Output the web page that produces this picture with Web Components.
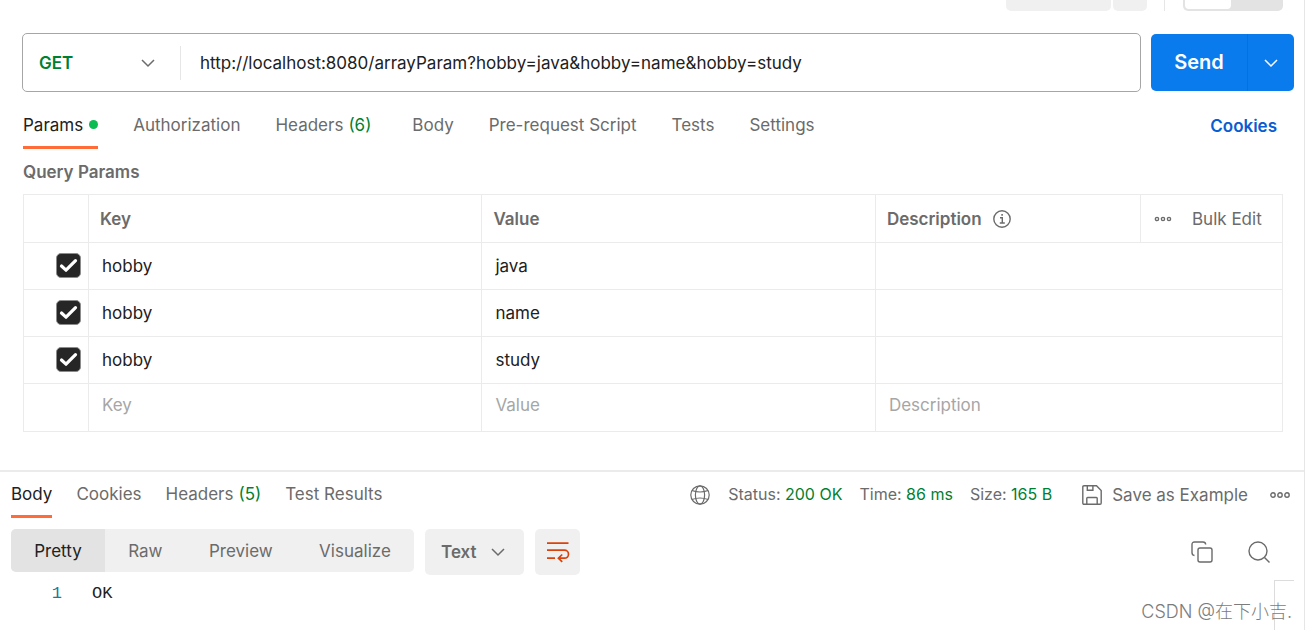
<!DOCTYPE html>
<html lang="en">
<head>
<meta charset="utf-8">
<title>API client</title>
<style>
html, body { margin: 0; }
body { background: #fff; color: #212121; font: 17px/24px Inter, "Noto Sans CJK SC", sans-serif; }
</style>
</head>
<body>
<api-client></api-client>
<script>
const define = (name, html, setup) => {
  const template = document.createElement('template');
  template.innerHTML = html;
  customElements.define(name, class extends HTMLElement {
    connectedCallback() {
      if (this.shadowRoot) return;
      this.attachShadow({ mode: 'open' }).append(template.content.cloneNode(true));
      if (setup) setup(this, this.shadowRoot);
    }
  });
};

const icons = {
  chevron: [14, 8, '<path d="M1 1l6 6 6-6" stroke-width="1.5"/>'],
  info: [18, 18, '<circle cx="9" cy="9" r="8.2"/><path d="M7 7.8h2.3V13M6.8 13h5" /><path d="M8.3 4.9h1.6" stroke-width="1.8"/>'],
  dots: [18, 6, '<circle cx="3" cy="3" r="1.6"/><circle cx="9" cy="3" r="1.6"/><circle cx="15" cy="3" r="1.6"/>'],
  more: [20, 6, '<circle cx="3" cy="3" r="2.2"/><circle cx="10" cy="3" r="2.2"/><circle cx="17" cy="3" r="2.2"/>'],
  globe: [20, 20, '<g stroke-width="1.2"><circle cx="10" cy="10" r="9.2"/><ellipse cx="10" cy="10" rx="4.600" ry="9.200"/><path d="M2 5.500Q10 8.500 18 5.500M2 14.500Q10 11.500 18 14.500"/></g>'],
  save: [20, 20, '<path d="M2 .8h12.500L19.200 5.500V18q0 1.200-1.200 1.200H2Q.8 19.200.8 18V2Q.8.8 2 .8z"/><path d="M5.300 1v4.200h5.600V1M4.800 19v-5.700q0-.8.8-.8h8.800q.8 0 .8.800V19"/>'],
  copy: [22, 22, '<path d="M3.500 14.500Q1 14.300 1 11.500V3.500Q1 1 3.500 1H12q2.500 0 2.700 2.500"/><rect x="7" y="7" width="14" height="14" rx="2"/>'],
  search: [22, 22, '<circle cx="10" cy="10" r="9"/><path d="M16.500 16.500L21.500 21.500"/>'],
  wrap: [22, 20, '<path d="M0 1.200h21.500M0 8.200H17.500a4 4 0 0 1 0 8H12M0 16.200h8M15.200 12.500l-3.800 3.700 3.800 3.700" stroke-width="1.700"/>'],
  check: [25, 25, '<path d="M5.500 13l4.500 4.200 9.500-9.500" stroke-width="3.200" stroke-linecap="round" stroke-linejoin="round"/>']
};
define('ui-icon', `<style>
  :host { display: inline-flex; flex: none; pointer-events: none; }
  svg { display: block; overflow: visible; fill: none; stroke: currentColor; stroke-width: 1.4; }
</style>`, (el, root) => {
  const [w, h, body] = icons[el.getAttribute('name')];
  root.innerHTML += `<svg width="${w}" height="${h}" viewBox="0 0 ${w} ${h}" aria-hidden="true">${body}</svg>`;
});

define('ui-tab', `<style>
  :host { display: block; color: #6b6b6b; }
  :host([active]) { color: #212121; }
  button { all: unset; box-sizing: border-box; display: flex; align-items: center; gap: 5px; height: 46px; border-bottom: 3px solid transparent; cursor: pointer; white-space: nowrap; }
  :host([active]) button { border-color: #ff6c37; }
  .count { color: #007f31; }
  .dot { width: 9px; height: 9px; margin-left: 1px; border-radius: 50%; background: #0cbb52; }
</style><button type="button"><slot></slot></button>`, (el, root) => {
  const extra = document.createElement('span');
  if (el.hasAttribute('count')) { extra.className = 'count'; extra.textContent = `(${el.getAttribute('count')})`; }
  else if (el.hasAttribute('changed')) extra.className = 'dot';
  else return;
  root.querySelector('button').append(extra);
});

define('ui-tabs', `<style>
  :host { display: flex; gap: var(--tab-gap, 35px); }
</style><slot></slot>`);

define('ui-select', `<style>
  :host { display: grid; grid-template-rows: 100%; align-items: center; font-weight: 600; color: #6b6b6b; }
  select { all: unset; grid-area: 1 / 1; box-sizing: border-box; width: 100%; height: 24px; line-height: 24px; padding: 0 16px; cursor: pointer; }
  ui-icon { grid-area: 1 / 1; justify-self: end; margin-right: var(--chevron-gap, 19px); color: #6b6b6b; }
</style><select><option></option></select><ui-icon name="chevron"></ui-icon>`, (el, root) => {
  root.querySelector('option').textContent = el.getAttribute('value');
  root.querySelector('select').setAttribute('aria-label', el.getAttribute('label'));
});

define('top-actions', `<style>
  :host { display: flex; justify-content: flex-end; height: 11px; padding-right: 21px; }
  .main, .menu { background: #f0f0f0; border-radius: 0 0 5px 5px; }
  .main { width: 105px; margin-right: 2px; }
  .menu { width: 34px; margin-right: 17px; }
  .line { width: 1px; background: #e6e6e6; margin-right: 18px; }
  .toggle { box-sizing: border-box; width: 100px; padding: 0 52px 2px 2px; background: #e3e3e3; border-radius: 0 0 5px 5px; }
  .on { height: 9px; background: #fff; border-radius: 0 0 4px 4px; }
</style><div class="main"></div><div class="menu"></div><div class="line"></div><div class="toggle"><div class="on"></div></div>`);

define('request-bar', `<style>
  :host { display: flex; align-items: center; gap: 10px; padding: 22px 10px 0 22px; }
  .address { box-sizing: border-box; flex: 1; display: flex; align-items: center; height: 59px; border: 1px solid #a6a6a6; border-radius: 5px; }
  ui-select { width: 157px; height: 57px; color: #007f31; --chevron-gap: 25px; }
  .line { width: 1px; height: 34px; background: #e6e6e6; }
  input { all: unset; flex: 1; height: 57px; padding-left: 19px; cursor: text; }
  .send { display: flex; height: 57px; border-radius: 5px; overflow: hidden; }
  button { all: unset; box-sizing: border-box; display: flex; align-items: center; justify-content: center; background: #097bed; color: #fff; cursor: pointer; font-size: 20px; font-weight: 600; }
  .go { width: 96px; padding-bottom: 2px; }
  .menu { width: 47px; border-left: 1px solid #0a6fd6; }
</style>
<div class="address"><ui-select value="GET" label="Method"></ui-select><div class="line"></div>
<input aria-label="Request URL" value="http://localhost:8080/arrayParam?hobby=java&amp;hobby=name&amp;hobby=study"></div>
<div class="send"><button type="button" class="go">Send</button><button type="button" class="menu" aria-label="Send options"><ui-icon name="chevron"></ui-icon></button></div>`);

define('request-tabs', `<style>
  :host { display: flex; justify-content: space-between; align-items: center; padding: 11px 27px 0 23px; }
  a { color: #0b5cd0; font-weight: 600; text-decoration: none; }
  ui-tab[count] { padding-right: 6px; }
</style>
<ui-tabs><ui-tab active changed>Params</ui-tab><ui-tab>Authorization</ui-tab><ui-tab count="6">Headers</ui-tab><ui-tab>Body</ui-tab><ui-tab>Pre-request Script</ui-tab><ui-tab>Tests</ui-tab><ui-tab>Settings</ui-tab></ui-tabs>
<a href="#cookies">Cookies</a>`);

define('ui-check', `<style>
  :host { display: grid; width: 25px; height: 25px; color: #fff; }
  input { appearance: none; grid-area: 1 / 1; margin: 0; width: 25px; height: 25px; border: 1px solid #8c8c8c; border-radius: 5px; }
  input:checked { background: #262626; }
  input:not(:checked) + ui-icon { visibility: hidden; }
  ui-icon { grid-area: 1 / 1; }
</style><input type="checkbox" checked aria-label="Include parameter"><ui-icon name="check"></ui-icon>`);

define('params-table', `<style>
  :host { display: block; padding: 11px 21px 0 23px; color: #6b6b6b; }
  h2 { margin: 0 0 10px; font-size: 17px; line-height: 24px; font-weight: 600; }
  table { width: 100%; table-layout: fixed; border-collapse: collapse; }
  th, td { box-sizing: border-box; height: 47px; padding: 0; border: 1px solid #ebebeb; text-align: left; font-weight: 400; }
  tr:first-child th, tbody tr:last-child td { height: 48px; }
  tbody tr:last-child td { padding-bottom: 5px; }
  th { padding-left: 11px; font-weight: 600; }
  .pick { width: 65px; }
  .wide { width: 31.25%; }
  .bulk { width: 142px; padding: 0; }
  .info, .tools { display: flex; align-items: center; }
  .info { gap: 11px; }
  .tools { gap: 20px; padding-left: 13px; }
  button { all: unset; display: flex; cursor: pointer; font-weight: 400; white-space: nowrap; }
  ui-check { margin: 0 0 2px 32px; }
  input { all: unset; display: block; box-sizing: border-box; width: 100%; height: 24px; padding-left: 13px; color: #212121; cursor: text; }
  input::placeholder { color: #a6a6a6; }
</style>
<h2>Query Params</h2>
<table><thead><tr><th class="pick"></th><th class="wide">Key</th><th class="wide">Value</th>
<th><div class="info">Description <ui-icon name="info"></ui-icon></div></th>
<th class="bulk"><div class="tools"><button type="button" aria-label="Table options"><ui-icon name="dots"></ui-icon></button><button type="button">Bulk Edit</button></div></th></tr></thead><tbody></tbody></table>`, (el, root) => {
  const field = (label, value) => `<input aria-label="${label}" placeholder="${value ? '' : label}" value="${value || ''}">`;
  root.querySelector('tbody').innerHTML = [['hobby', 'java'], ['hobby', 'name'], ['hobby', 'study'], []].map(([k, v]) =>
    `<tr><td>${k ? '<ui-check></ui-check>' : ''}</td><td>${field('Key', k)}</td><td>${field('Value', v)}</td><td colspan="2">${k ? '<input aria-label="Description">' : field('Description')}</td></tr>`).join('');
});

define('response-header', `<style>
  :host { display: flex; justify-content: space-between; align-items: center; padding: 0 14px 0 11px; color: #6b6b6b; }
  ui-tabs { --tab-gap: 24px; }
  .meta { display: flex; align-items: center; white-space: nowrap; }
  .stats { display: flex; gap: 17px; margin: 0 30px 0 18px; padding-bottom: 2px; font-size: 16px; }
  b { font-weight: 400; color: #007f31; }
  button { all: unset; display: flex; align-items: center; gap: 10px; cursor: pointer; }
  .more { margin-left: 22px; }
</style>
<ui-tabs><ui-tab active>Body</ui-tab><ui-tab>Cookies</ui-tab><ui-tab count="5">Headers</ui-tab><ui-tab>Test Results</ui-tab></ui-tabs>
<div class="meta"><ui-icon name="globe"></ui-icon>
<div class="stats"><span>Status: <b>200 OK</b></span><span>Time: <b>86 ms</b></span><span>Size: <b>165 B</b></span></div>
<button type="button"><ui-icon name="save"></ui-icon>Save as Example</button>
<button type="button" class="more" aria-label="More actions"><ui-icon name="more"></ui-icon></button></div>`);

define('response-toolbar', `<style>
  :host { display: flex; align-items: flex-start; gap: 11px; padding: 11px 34px 0 11px; color: #6b6b6b; }
  button { all: unset; display: flex; align-items: center; justify-content: center; cursor: pointer; }
  .modes { display: flex; width: 403px; height: 43px; border-radius: 5px; overflow: hidden; background: #f0f0f0; }
  .modes button { flex: 1 0 auto; padding: 0 23px; }
  .modes .on { background: #e3e3e3; color: #212121; }
  ui-select, .wrap { height: 46px; border-radius: 5px; background: #f0f0f0; }
  ui-select { width: 99px; }
  .wrap { width: 45px; color: #d9430d; }
  .tools { display: flex; gap: 35px; align-self: center; margin-left: auto; }
</style>
<div class="modes"><button type="button" class="on">Pretty</button><button type="button">Raw</button><button type="button">Preview</button><button type="button">Visualize</button></div>
<ui-select value="Text" label="Response format"></ui-select>
<button type="button" class="wrap" aria-label="Wrap lines"><ui-icon name="wrap"></ui-icon></button>
<div class="tools"><button type="button" aria-label="Copy"><ui-icon name="copy"></ui-icon></button><button type="button" aria-label="Search"><ui-icon name="search"></ui-icon></button></div>`);

define('code-view', `<style>
  :host { flex: 1; display: flex; align-items: stretch; padding: 5px 10px 0 0; font-family: "Liberation Mono", monospace; }
  .number { width: 62px; padding-top: 2px; text-align: right; color: #237893; }
  pre { flex: 1; margin: 0; padding: 2px 0 0 30px; font: inherit; }
  .map { width: 19px; border: 1px solid #dcdcdc; border-width: 1px 0 0 1px; }
</style><div class="number">1</div><pre><slot></slot></pre><div class="map"></div>`);

define('api-client', `<style>
  :host { box-sizing: border-box; position: relative; display: flex; flex-direction: column; min-height: 100vh; border-right: 1px solid #e6e6e6; }
  response-header { margin-top: 38px; border-top: 2px solid #ebebeb; }
  .mark { position: absolute; right: 12px; bottom: 6px; font-size: 18px; font-weight: 300; color: #7c7c7c; }
</style>
<top-actions></top-actions><request-bar></request-bar><request-tabs></request-tabs><params-table></params-table>
<response-header></response-header><response-toolbar></response-toolbar><code-view>OK</code-view>
<div class="mark">CSDN @在下小吉.</div>`);
</script>
</body>
</html>
